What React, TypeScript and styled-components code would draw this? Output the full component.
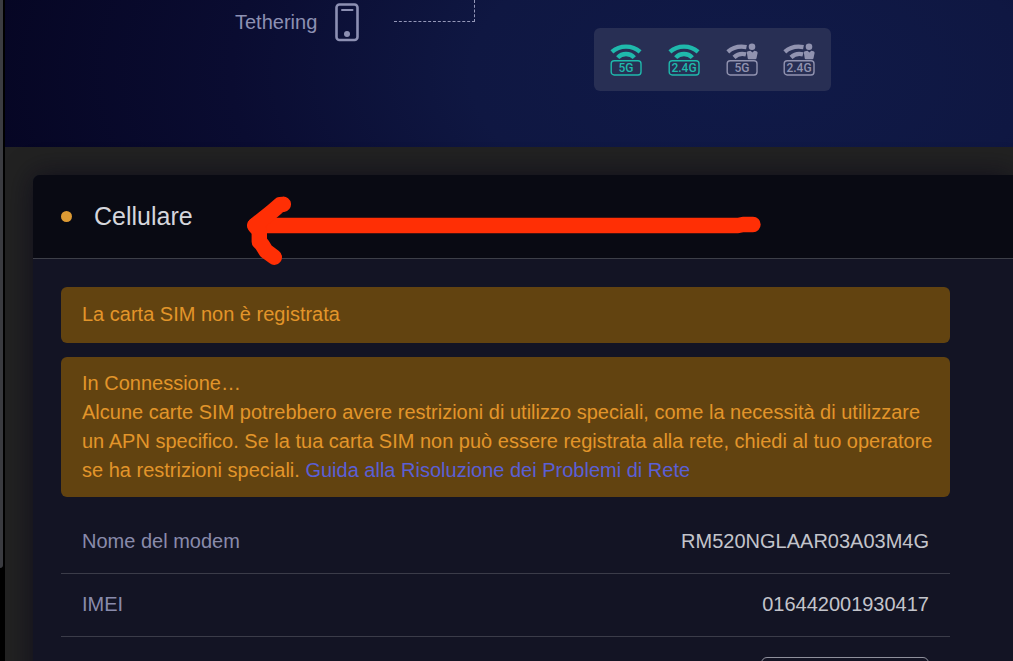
import React from "react";
import styled, { createGlobalStyle } from "styled-components";

const GlobalStyle = createGlobalStyle`
  * { box-sizing: border-box; }
  html, body { height: 100%; overflow: hidden; }
  body {
    margin: 0;
    background: #222222;
    color: #c3c4cb;
    font: 20px/29px "Liberation Sans", Arial, sans-serif;
  }
`;

const Shell = styled.div`
  display: flex;
  height: 100vh;
  overflow: hidden;
`;

const Track = styled.div`
  flex: 0 0 5px;
  background: #000000;
`;

const Thumb = styled.div`
  width: 3px;
  height: 86%;
  background: #3b3c41;
  border-radius: 0 0 3px 0;
`;

const Page = styled.div`
  flex: 1;
  min-width: 0;
`;

const Topology = styled.section`
  display: flex;
  align-items: flex-start;
  height: 147px;
  padding-left: 230px;
  background: radial-gradient(ellipse 800px 420px at 74% 50%, #101a48 0%, #0f1742 35%, #0a0c31 65%, #060624 95%);
`;

const Device = styled.div`
  display: flex;
  align-items: center;
  gap: 18px;
  padding-top: 3px;
  color: #8d90b3;
`;

const Connector = styled.div`
  width: 81px;
  height: 22px;
  margin-left: 34px;
  border: dashed #9497b8;
  border-width: 0 1px 1px 0;
`;

const WifiBar = styled.div`
  display: flex;
  align-items: center;
  justify-content: space-between;
  width: 237px;
  height: 63px;
  margin: 28px 0 0 119px;
  padding: 0 16px;
  border-radius: 6px;
  background: #282f54;
`;

const WifiSvg = styled.svg<{ $active: boolean }>`
  color: ${(p) => (p.$active ? "#1fb9ac" : "#9193b0")};
  font: 500 12px Roboto, sans-serif;
`;

const Content = styled.main`
  padding: 28px 0 0 28px;
`;

const Panel = styled.section`
  position: relative;
  border-radius: 7px 0 0 0;
  background: #131424;
  box-shadow: 0 0 28px rgba(8, 6, 24, 0.7);
`;

const PanelHeader = styled.header`
  display: flex;
  align-items: center;
  gap: 22px;
  height: 84px;
  padding: 0 28px;
  border-bottom: 1px solid #3d3f48;
  border-radius: 7px 0 0 0;
  background: #090a13;
`;

const StatusDot = styled.span`
  width: 11px;
  height: 11px;
  border-radius: 50%;
  background: #dc9a34;
`;

const Title = styled.h2`
  margin: 0;
  color: #d5d6dc;
  font-size: 25px;
  font-weight: 400;
`;

const Arrow = styled.svg`
  position: absolute;
  top: 20px;
  left: 212px;
`;

const PanelBody = styled.div`
  display: flex;
  flex-direction: column;
  gap: 14px;
  padding: 28px 63px 28px 28px;
`;

const Alert = styled.p`
  margin: 0;
  padding: 12px 14px 12px 21px;
  border-radius: 6px;
  background: #624310;
  color: #e2952a;
`;

const ShortAlert = styled(Alert)`
  padding-top: 13px;
  padding-bottom: 14px;
`;

const GuideLink = styled.a`
  color: #5a5fd6;
  text-decoration: none;
`;

const Details = styled.div`
  display: flex;
  flex-direction: column;
`;

const Row = styled.div`
  display: flex;
  align-items: center;
  justify-content: space-between;
  height: 63px;
  padding: 0 21px 1px;
  border-bottom: 1px solid #3b3c49;
`;

const RowLabel = styled.span`
  color: #898bab;
`;

const SelectRow = styled.div`
  display: flex;
  justify-content: flex-end;
  padding: 20px 21px;
`;

const Select = styled.select`
  width: 168px;
  height: 42px;
  border: 1px solid #8f909c;
  border-radius: 6px;
  background: transparent;
  color: inherit;
  appearance: none;
`;

function PhoneIcon() {
  return (
    <svg width="25" height="39" viewBox="0 0 25 39" fill="none" stroke="currentColor" aria-hidden="true">
      <rect x="1.5" y="1.5" width="21" height="35.5" rx="3" strokeWidth="2.6" />
      <path d="M7 7H17.5" strokeWidth="2" strokeLinecap="round" />
      <circle cx="12" cy="31" r="3" fill="currentColor" stroke="none" />
    </svg>
  );
}

function WifiIcon({ band, guest = false }: { band: string; guest?: boolean }) {
  return (
    <WifiSvg $active={!guest} width="32" height="34" viewBox="0 0 32 34" fill="none" stroke="currentColor" role="img" aria-label={`Wi-Fi ${band}`}>
      {guest ? (
        <>
          <path d="M1.8 8.8C7 4.2 13 2.8 20.5 4.2" strokeWidth="4.3" />
          <path d="M8 14.4C11.5 11 15.5 10.2 20 11.4" strokeWidth="4.3" />
          <g fill="currentColor" stroke="none">
            <circle cx="26" cy="3.8" r="3.3" />
            <path d="M22 8.2 24.5 7.8 26.4 9.4 28.3 7.8 30.5 8.2Q31.8 8.6 31.6 10L30.5 15.2Q30.3 16.2 29.3 16.2H22.8Q21.8 16.2 21.7 15.2L20.9 9.8Q20.7 8.5 22 8.2Z" />
          </g>
        </>
      ) : (
        <>
          <path d="M1.9 8.8C9.7 1.8 22.3 1.8 30.1 8.8" strokeWidth="4.3" />
          <path d="M7.7 14.6C12 9.8 20 9.8 24.3 14.6" strokeWidth="4.3" />
        </>
      )}
      <rect x="1.2" y="17.8" width="29.8" height="14.2" rx="3" strokeWidth="1.4" />
      <text x="16" y="29" textAnchor="middle" fill="currentColor" stroke="none">
        {band}
      </text>
    </WifiSvg>
  );
}

function HandDrawnArrow() {
  return (
    <Arrow width="520" height="72" viewBox="245 195 520 72" fill="none" stroke="#ff2f05" strokeWidth="15.4" strokeLinecap="round" strokeLinejoin="round" aria-hidden="true">
      <path d="M753 224.5H743L738 225.5H255" />
      <path d="M283.3 204.3 280 204.7 271 212.5 254.7 225.5 259.3 231 259.3 241.7 262 244.5 266 251 274.3 257.2" />
    </Arrow>
  );
}

export default function App() {
  return (
    <>
      <GlobalStyle />
      <Shell>
        <Track>
          <Thumb />
        </Track>
        <Page>
          <Topology>
            <Device>
              <span>Tethering</span>
              <PhoneIcon />
            </Device>
            <Connector />
            <WifiBar>
              <WifiIcon band="5G" />
              <WifiIcon band="2.4G" />
              <WifiIcon band="5G" guest />
              <WifiIcon band="2.4G" guest />
            </WifiBar>
          </Topology>
          <Content>
            <Panel>
              <PanelHeader>
                <StatusDot />
                <Title>Cellulare</Title>
              </PanelHeader>
              <PanelBody>
                <ShortAlert>La carta SIM non è registrata</ShortAlert>
                <Alert>
                  In Connessione…
                  <br />
                  Alcune carte SIM potrebbero avere restrizioni di utilizzo speciali, come la necessità di utilizzare un APN
                  specifico. Se la tua carta SIM non può essere registrata alla rete, chiedi al tuo operatore se ha
                  restrizioni speciali. <GuideLink href="#guida">Guida alla Risoluzione dei Problemi di Rete</GuideLink>
                </Alert>
                <Details>
                  <Row>
                    <RowLabel>Nome del modem</RowLabel>
                    <span>RM520NGLAAR03A03M4G</span>
                  </Row>
                  <Row>
                    <RowLabel>IMEI</RowLabel>
                    <span>016442001930417</span>
                  </Row>
                  <SelectRow>
                    <Select aria-label="SIM" />
                  </SelectRow>
                </Details>
              </PanelBody>
              <HandDrawnArrow />
            </Panel>
          </Content>
        </Page>
      </Shell>
    </>
  );
}
